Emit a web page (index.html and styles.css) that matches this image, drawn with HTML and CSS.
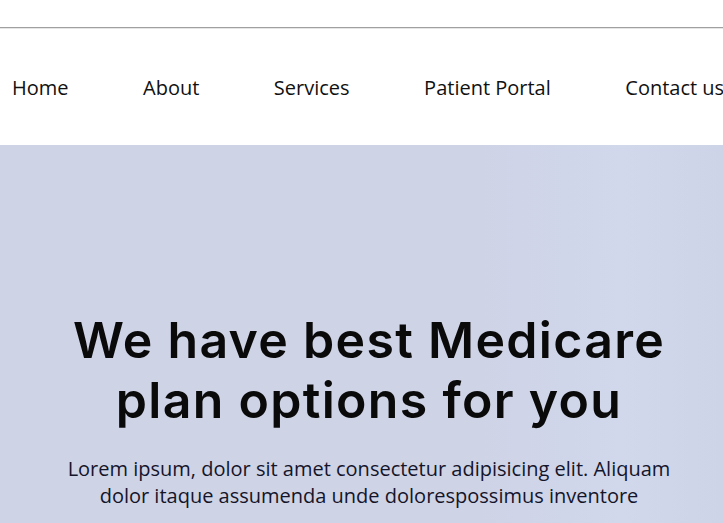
FILE: index.html
```html
<!DOCTYPE html>
<html lang="en">
<head>
<meta charset="utf-8">
<title>Medicare</title>
<link rel="stylesheet" href="styles.css">
</head>
<body>
<div class="topbar"></div>
<nav class="nav">
  <a href="#">Home</a>
  <a href="#">About</a>
  <a href="#">Services</a>
  <a href="#">Patient Portal</a>
  <a href="#">Contact us</a>
</nav>
<section class="hero">
  <div class="hero-inner">
    <h1 class="hero-title">We have best Medicare plan options for you</h1>
    <p class="hero-text">Lorem ipsum, dolor sit amet consectetur adipisicing elit. Aliquam dolor itaque assumenda unde dolorespossimus inventore</p>
  </div>
</section>
</body>
</html>
```
FILE: styles.css
```css
html, body {
  margin: 0;
  padding: 0;
  background: #ffffff;
  overflow: hidden;
}
body {
  font-family: "Open Sans", "Noto Sans", sans-serif;
  color: #111;
}
.topbar {
  height: 27px;
  border-bottom: 1px solid #a0a0a0;
  box-shadow: 0 1px 0 #e6e6e6;
}
.nav {
  display: flex;
  align-items: center;
  gap: 74.5px;
  height: 117px;
  padding-left: 12px;
  padding-top: 2px;
  box-sizing: border-box;
  white-space: nowrap;
}
.nav a {
  font-size: 20px;
  color: #111;
  text-decoration: none;
}
.hero {
  height: 378px;
  background: linear-gradient(90deg, #ced3e6 0%, #ced3e6 66%, #cfd4e8 72%, #d1d8eb 86%, #d0d6ea 92%, #ced4e7 100%);
}
.hero-inner {
  padding: 165px 0 0 15px;
  text-align: center;
}
.hero-title {
  margin: 0 auto;
  width: 640px;
  font-family: "Inter", sans-serif;
  font-weight: 600;
  font-size: 50px;
  letter-spacing: 1.3px;
  line-height: 60px;
  color: #0a0a0a;
}
.hero-text {
  margin: 25px auto 0;
  width: 640px;
  font-size: 20px;
  line-height: 27px;
  color: #15152a;
}
```
